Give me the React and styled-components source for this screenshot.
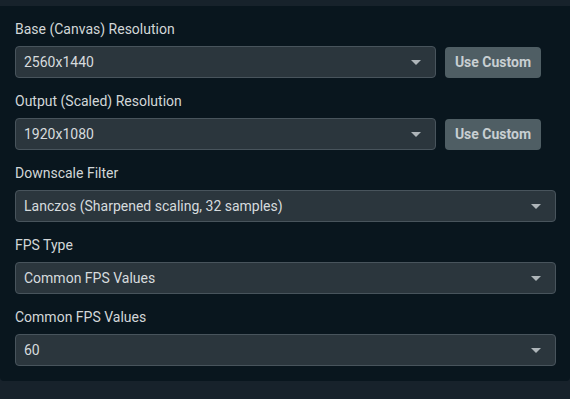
import styled, { createGlobalStyle } from "styled-components";

const GlobalStyle = createGlobalStyle`
  html, body {
    margin: 0;
    padding: 0;
    background-color: #17222b;
    font-family: Roboto, "Liberation Sans", sans-serif;
  }
`;

const Page = styled.div`
  width: 570px;
  height: 399px;
  padding-top: 6px;
  box-sizing: border-box;
  background-color: #17222b;
`;

const Panel = styled.section`
  background-color: #09161e;
  border-radius: 0 0 4px 4px;
  padding: 15px 14px 15px 15px;
  display: flex;
  flex-direction: column;
  gap: 15px;
`;

const Field = styled.div`
  display: flex;
  flex-direction: column;
  gap: 8px;
`;

const Label = styled.label`
  font-size: 14px;
  line-height: 17px;
  color: #d2d6d8;
`;

const Row = styled.div`
  display: flex;
  gap: 9px;
  align-items: center;
`;

const Select = styled.div`
  flex: ${(p) => (p.$narrow ? "0 0 421px" : "1")};
  height: 32px;
  box-sizing: border-box;
  background-color: #2b363d;
  border: 1px solid #48545c;
  border-radius: 4px;
  display: flex;
  align-items: center;
  justify-content: space-between;
  padding: 0 14px 0 8px;
  font-size: 14px;
  color: #d6dbdd;
`;

const Caret = styled.span`
  width: 0;
  height: 0;
  border-left: 5px solid transparent;
  border-right: 5px solid transparent;
  border-top: 5px solid #aeb5b9;
`;

const Button = styled.button`
  width: 96px;
  height: 31px;
  border: none;
  border-radius: 4px;
  background-color: #4f5e64;
  color: #c8cfd2;
  font-family: inherit;
  font-size: 14px;
  font-weight: 700;
  padding: 0;
`;

const fields = [
  { label: "Base (Canvas) Resolution", value: "2560x1440", custom: true },
  { label: "Output (Scaled) Resolution", value: "1920x1080", custom: true },
  { label: "Downscale Filter", value: "Lanczos (Sharpened scaling, 32 samples)" },
  { label: "FPS Type", value: "Common FPS Values" },
  { label: "Common FPS Values", value: "60" },
];

const App = () => {
  return (
    <>
      <GlobalStyle />
      <Page>
        <Panel>
          {fields.map((f) => (
            <Field key={f.label}>
              <Label>{f.label}</Label>
              <Row>
                <Select $narrow={f.custom}>
                  {f.value}
                  <Caret />
                </Select>
                {f.custom && <Button>Use Custom</Button>}
              </Row>
            </Field>
          ))}
        </Panel>
      </Page>
    </>
  );
};

export default App;
